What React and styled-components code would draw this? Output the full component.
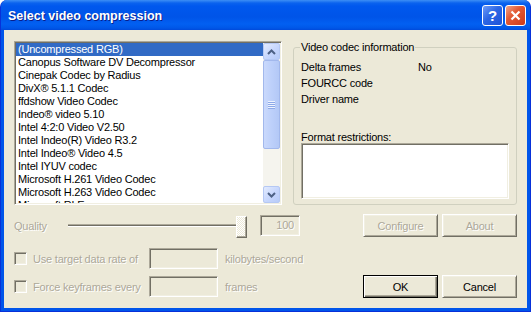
import React from 'react'
import styled, { createGlobalStyle } from 'styled-components'

const codecs = [
    '(Uncompressed RGB)',
    'Canopus Software DV Decompressor',
    'Cinepak Codec by Radius',
    'DivX® 5.1.1 Codec',
    'ffdshow Video Codec',
    'Indeo® video 5.10',
    'Intel 4:2:0 Video V2.50',
    'Intel Indeo(R) Video R3.2',
    'Intel Indeo® Video 4.5',
    'Intel IYUV codec',
    'Microsoft H.261 Video Codec',
    'Microsoft H.263 Video Codec',
    'Microsoft RLE',
]

function Chevron({ down }) {
    return (
        <svg width="9" height="6" viewBox="0 0 9 6">
            <path
                d={down ? 'M1 1 L4.5 4.5 L8 1' : 'M1 5 L4.5 1.5 L8 5'}
                fill="none"
                stroke="#4D6185"
                strokeWidth="2"
            />
        </svg>
    )
}

function App() {
    return (
        <>
            <GlobalStyle />
            <Window>
                <TitleBar>
                    <Title>Select video compression</Title>
                    <Caption>
                        <HelpButton>?</HelpButton>
                        <CloseButton>
                            <svg width="11" height="11" viewBox="0 0 11 11">
                                <path d="M1.5 1.5 L9.5 9.5 M9.5 1.5 L1.5 9.5" stroke="#fff" strokeWidth="2.2" />
                            </svg>
                        </CloseButton>
                    </Caption>
                </TitleBar>

                <Client>
                    <TopRow>
                        <ListBox>
                            <Items>
                                {codecs.map((name, i) => (
                                    <Item key={name} $selected={i === 0}>{name}</Item>
                                ))}
                            </Items>
                            <ScrollBar>
                                <ScrollButton><Chevron /></ScrollButton>
                                <Thumb>
                                    <Grip />
                                </Thumb>
                                <Track />
                                <ScrollButton><Chevron down /></ScrollButton>
                            </ScrollBar>
                        </ListBox>

                        <Group>
                            <Legend>Video codec information</Legend>
                            <InfoList>
                                <InfoRow><span>Delta frames</span><span>No</span></InfoRow>
                                <InfoRow><span>FOURCC code</span><span></span></InfoRow>
                                <InfoRow><span>Driver name</span><span></span></InfoRow>
                            </InfoList>
                            <RestrictLabel>Format restrictions:</RestrictLabel>
                            <Restrictions />
                        </Group>
                    </TopRow>

                    <Row $mt={9} $h={23}>
                        <FieldLabel $w={54}>Quality</FieldLabel>
                        <Slider>
                            <SliderTrack />
                            <SliderThumb />
                        </Slider>
                        <Edit $w={40} $ml={13}>100</Edit>
                        <Button $push disabled>Configure</Button>
                        <Button $gap disabled>About</Button>
                    </Row>

                    <Row $mt={11} $h={21}>
                        <CheckLabel>
                            <CheckBox />
                            <span>Use target data rate of</span>
                        </CheckLabel>
                        <Edit $w={69} />
                        <FieldLabel $ml={7}>kilobytes/second</FieldLabel>
                    </Row>

                    <Row $mt={6} $h={23}>
                        <CheckLabel>
                            <CheckBox />
                            <span>Force keyframes every</span>
                        </CheckLabel>
                        <Edit $w={69} />
                        <FieldLabel $ml={7}>frames</FieldLabel>
                        <Button $push $default>OK</Button>
                        <Button $gap>Cancel</Button>
                    </Row>
                </Client>
            </Window>
        </>
    )
}

export default App

const GlobalStyle = createGlobalStyle`
    html, body {
        margin: 0;
        padding: 0;
        background: #fff;
    }
`

const Window = styled.div`
    width: 531px;
    height: 312px;
    box-sizing: border-box;
    display: flex;
    flex-direction: column;
    background: #0055EA;
    border: 1px solid #0831D9;
    border-top: none;
    border-radius: 7px 7px 0 0;
    overflow: hidden;
    font-family: 'Liberation Sans', Arial, sans-serif;
    font-size: 11px;
    letter-spacing: -0.2px;
    color: #000;
`

const TitleBar = styled.div`
    height: 30px;
    flex: none;
    display: flex;
    align-items: center;
    justify-content: space-between;
    padding: 0 4px 0 7px;
    background: linear-gradient(180deg,
        #3D8FF5 0px, #0B63EE 3px, #0058EE 6px, #0054E8 17px,
        #0260F2 24px, #0057E8 28px, #004ADB 30px);
`

const Title = styled.div`
    color: #fff;
    font-weight: bold;
    font-size: 12.5px;
    letter-spacing: 0;
    padding-top: 2px;
    text-shadow: 1px 1px 0 #0A1E8A;
`

const Caption = styled.div`
    display: flex;
    gap: 2px;
    padding-top: 1px;
`

const CaptionButton = styled.div`
    width: 21px;
    height: 21px;
    box-sizing: border-box;
    border: 1px solid #fff;
    border-radius: 3px;
    display: flex;
    align-items: center;
    justify-content: center;
`

const HelpButton = styled(CaptionButton)`
    background: linear-gradient(135deg, #6E9CF9 0%, #2C66E4 45%, #1E53D8 100%);
    color: #fff;
    font-weight: bold;
    font-size: 15px;
    letter-spacing: 0;
`

const CloseButton = styled(CaptionButton)`
    background: linear-gradient(135deg, #F0A58A 0%, #E35A35 40%, #CC3A1A 100%);
`

const Client = styled.div`
    flex: 1;
    margin: 0 3px 3px;
    background: #ECE9D8;
    padding: 11px 10px 0;
    display: flex;
    flex-direction: column;
`

const sunken = `
    box-sizing: border-box;
    border: 1px solid;
    border-color: #ACA899 #FFFFFF #FFFFFF #ACA899;
    box-shadow: inset 1px 1px 0 #716F64, inset -1px -1px 0 #F1EFE2;
    padding: 1px;
`

const TopRow = styled.div`
    display: flex;
    gap: 11px;
    height: 164px;
`

const ListBox = styled.div`
    ${sunken}
    width: 268px;
    background: #fff;
    display: flex;
`

const Items = styled.div`
    flex: 1;
    overflow: hidden;
`

const Item = styled.div`
    height: 13px;
    line-height: 13px;
    padding-left: 2px;
    white-space: nowrap;
    background: ${p => (p.$selected ? '#316AC5' : 'transparent')};
    color: ${p => (p.$selected ? '#fff' : '#000')};
`

const ScrollBar = styled.div`
    width: 17px;
    display: flex;
    flex-direction: column;
    background: #F5F4EE;
`

const ScrollButton = styled.div`
    height: 17px;
    box-sizing: border-box;
    border: 1px solid #B5C8F4;
    border-radius: 2px;
    background: linear-gradient(135deg, #E3EBFE 0%, #C6D6FD 55%, #B7CBF8 100%);
    display: flex;
    align-items: center;
    justify-content: center;
`

const Thumb = styled.div`
    height: 89px;
    box-sizing: border-box;
    border: 1px solid #A2B8EC;
    border-radius: 2px;
    background: linear-gradient(90deg, #CAD9FC 0%, #BDD0FA 50%, #B3C8F6 100%);
    display: flex;
    align-items: center;
    justify-content: center;
`

const Grip = styled.div`
    width: 7px;
    height: 8px;
    background: repeating-linear-gradient(180deg, #EEF3FE 0 1px, #8DA9E8 1px 2px);
`

const Track = styled.div`
    flex: 1;
`

const Group = styled.fieldset`
    flex: 1;
    min-width: 0;
    margin: 0;
    padding: 0 7px 5px;
    border: 1px solid #D0D0BF;
    border-radius: 3px;
    display: flex;
    flex-direction: column;
`

const Legend = styled.legend`
    padding: 0 1px;
    margin-left: -1px;
    line-height: 13px;
`

const InfoList = styled.div`
    margin-top: 5px;
`

const InfoRow = styled.div`
    display: grid;
    grid-template-columns: 117px auto;
    line-height: 16px;
    height: 16px;
`

const RestrictLabel = styled.div`
    margin-top: 24px;
    line-height: 12px;
`

const Restrictions = styled.div`
    ${sunken}
    width: 208px;
    height: 56px;
    background: #fff;
`

const Row = styled.div`
    display: flex;
    align-items: center;
    height: ${p => p.$h}px;
    margin-top: ${p => p.$mt}px;
`

const disabledText = `
    color: #ACA899;
    text-shadow: 1px 1px 0 #fff;
`

const FieldLabel = styled.div`
    ${disabledText}
    width: ${p => (p.$w ? `${p.$w}px` : 'auto')};
    margin-left: ${p => p.$ml || 0}px;
    flex: none;
`

const Slider = styled.div`
    width: 179px;
    height: 23px;
    display: flex;
    align-items: center;
`

const SliderTrack = styled.div`
    flex: 1;
    height: 1px;
    background: #716F64;
    border-top: 1px solid #ACA899;
    border-bottom: 1px solid #fff;
`

const SliderThumb = styled.div`
    width: 11px;
    height: 22px;
    margin-top: 2px;
    box-sizing: border-box;
    border: 1px solid;
    border-color: #fff #716F64 #716F64 #fff;
    box-shadow: inset -1px -1px 0 #ACA899;
    background: repeating-conic-gradient(#fff 0 25%, #ECE9D8 0 50%) 0 0 / 2px 2px;
`

const Edit = styled.div`
    ${sunken}
    ${disabledText}
    width: ${p => p.$w}px;
    height: 21px;
    margin-left: ${p => p.$ml || 0}px;
    background: #ECE9D8;
    text-align: right;
    line-height: 17px;
    padding-right: 5px;
    flex: none;
`

const CheckLabel = styled.div`
    ${disabledText}
    width: 135px;
    display: flex;
    align-items: center;
    gap: 6px;
    flex: none;
`

const CheckBox = styled.div`
    ${sunken}
    width: 13px;
    height: 13px;
    background: #ECE9D8;
`

const Button = styled.div`
    width: 75px;
    height: 23px;
    box-sizing: border-box;
    margin-left: ${p => (p.$push ? 'auto' : p.$gap ? '4px' : '0')};
    display: flex;
    align-items: center;
    justify-content: center;
    background: #ECE9D8;
    border: 1px solid;
    border-color: ${p => (p.$default ? '#000' : '#fff #716F64 #716F64 #fff')};
    box-shadow: ${p => (p.$default
        ? 'inset 1px 1px 0 #fff, inset -1px -1px 0 #716F64, inset -2px -2px 0 #ACA899'
        : 'inset 1px 1px 0 #F1EFE2, inset -1px -1px 0 #ACA899')};
    color: ${p => (p.disabled ? '#ACA899' : '#000')};
    text-shadow: ${p => (p.disabled ? '1px 1px 0 #fff' : 'none')};
`
